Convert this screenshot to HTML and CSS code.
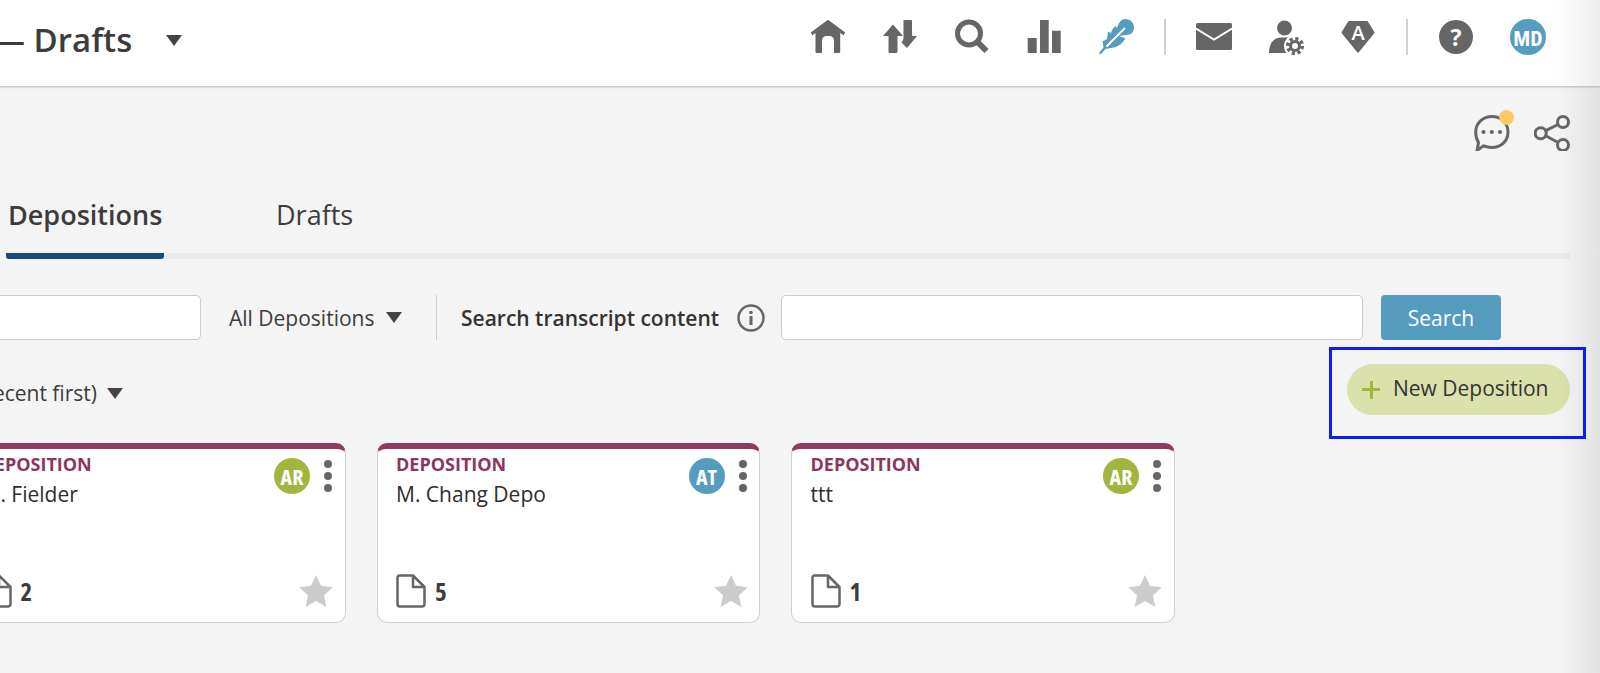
FILE: index.html
```html
<!DOCTYPE html>
<html lang="en">
<head>
<meta charset="utf-8">
<title>Drafts</title>
<link rel="stylesheet" href="styles.css">
</head>
<body>
<header class="topbar">
  <div class="title-wrap">
    <h1 class="title">— Drafts</h1>
    <span class="caret caret-lg"></span>
  </div>
  <nav class="nav">
    <svg class="icon" viewBox="0 0 36 36"><path class="fill" d="M18 .7 35.2 13.6 33.6 16.2 30.2 14V33a1 1 0 0 1-1 1H24V21.5a4.5 4.5 0 0 0-4.500-4.500h-3A4.500 4.500 0 0 0 12 21.500V34H6.500a1 1 0 0 1-1-1V14L2.400 16.200.8 13.600Z"/></svg>
    <svg class="icon" viewBox="0 0 36 36"><path class="fill" d="M11 5.500 21 17H15.500V32.500a1.500 1.500 0 0 1-1.500 1.500H8a1.500 1.500 0 0 1-1.500-1.500V17H1Z"/><path class="fill" d="M21.500 1H29a1 1 0 0 1 1 1V17H35L25 29 19.500 23.500C21 21.500 21.500 20.500 21.500 18Z"/></svg>
    <svg class="icon" viewBox="0 0 36 36"><circle class="line" cx="15" cy="14.500" r="11.500" stroke-width="5"/><path class="line" d="M23.500 23 32.500 32" stroke-width="6"/></svg>
    <svg class="icon" viewBox="0 0 36 36"><rect class="fill" x="1.700" y="19" width="9" height="15"/><rect class="fill" x="14" y="1" width="8.700" height="33"/><rect class="fill" x="26" y="11.700" width="8.700" height="22.300"/></svg>
    <svg class="icon" viewBox="0 0 36 36"><path class="blue" d="M27 0C32 0 36 3.500 36 8.500 36 12 34 15 31 15.500L21 17 27.500 19.500C24 24.500 20 28 15.500 28.500L7.500 30 2.500 35.500 1 34 5.500 28.500 4.500 22.500 9 20 10 12.500 13 14C14 10 16 8 18 7L19 9.500C20 5 23 0 27 0Z"/><path class="vein" d="M8.500 27.500 27 9"/></svg>
    <span class="vsep"></span>
    <svg class="icon" viewBox="0 0 36 36"><rect class="fill" x="0" y="4" width="36" height="27" rx="1.500"/><path class="vein" d="M0 9.500 18 20.500 36 9.500" stroke-width="3"/></svg>
    <svg class="icon" viewBox="0 0 36 36"><circle class="fill" cx="16.500" cy="9" r="7.500"/><path class="fill" d="M1 34C1 24 6 18.500 13 18.500H22L28 34Z"/><circle class="white" cx="27" cy="27" r="11"/><circle class="line" cx="27" cy="27" r="4.500" stroke-width="3"/><circle class="teeth" cx="27" cy="27" r="7.300"/></svg>
    <svg class="icon" viewBox="0 0 36 36"><path class="fill join" d="M9 3H27L33.500 13.500 18 32.500 2.500 13.500Z"/><text class="gem" x="18" y="20.500">A</text></svg>
    <span class="vsep"></span>
    <span class="circle help">?</span>
    <span class="circle md">MD</span>
  </nav>
  <span class="edge-shade"></span>
</header>

<main class="main">
  <div class="tools">
    <span class="comment">
      <svg class="icon" viewBox="0 0 36 36"><path class="line thin" d="M18 1.500C27 1.500 34 8 34 17S27 32.500 18 32.500C14.500 32.500 12 31.500 9.500 30.800L3 35.500 4.500 27.500C2.500 24.500 1.700 21 1.700 17 1.700 8 9 1.500 18 1.500Z"/><circle class="fill" cx="9.500" cy="17" r="2.100"/><circle class="fill" cx="17.800" cy="17" r="2.100"/><circle class="fill" cx="26" cy="17" r="2.100"/></svg>
      <span class="dot"></span>
    </span>
    <svg class="icon" viewBox="0 0 36 36"><circle class="line thin" cx="29" cy="7" r="5.500"/><circle class="line thin" cx="6.700" cy="18.300" r="5.500"/><circle class="line thin" cx="29" cy="30" r="5.500"/><path class="line thin" d="M24 9.500 11.700 15.700M11.700 20.800 24 27.500"/></svg>
  </div>

  <div class="tabs">
    <span class="tab active">Depositions</span>
    <span class="tab">Drafts</span>
  </div>

  <div class="filters">
    <span class="field name-field"></span>
    <span class="select">All Depositions <span class="caret"></span></span>
    <span class="hsep"></span>
    <strong class="search-label">Search transcript content</strong>
    <svg class="info" viewBox="0 0 28 28"><circle class="line info-ring" cx="14" cy="14" r="12.500"/><circle class="fill" cx="14" cy="8.500" r="1.800"/><rect class="fill" x="12.500" y="12" width="3" height="9"/></svg>
    <span class="field content-field"></span>
    <button class="search-btn">Search</button>
  </div>

  <div class="sort-row">
    <div class="sort"><span class="sort-text">Date (most recent first)</span><span class="caret"></span></div>
    <div class="highlight">
      <button class="new-btn"><span class="plus"></span>New Deposition</button>
    </div>
  </div>

  <div class="cards">
    <article class="card">
      <div class="card-top">
        <div class="card-text"><div class="kind">DEPOSITION</div><div class="name">M. Fielder</div></div>
        <span class="avatar green">AR</span>
        <span class="kebab"><i></i><i></i><i></i></span>
      </div>
      <div class="card-bottom">
        <svg class="doc" viewBox="0 0 30 34"><path class="line doc-line" d="M3.500 1.500H17L28.500 13V30A2.500 2.500 0 0 1 26 32.500H4A2.500 2.500 0 0 1 1.500 30V3.500A2 2 0 0 1 3.500 1.500ZM17 1.500V13H28.500"/></svg>
        <span class="count">2</span>
        <svg class="star" viewBox="0 0 34 32"><path d="M17 0 22 10.800 33.800 12.200 25 20.300 27.400 32 17 26.100 6.600 32 9 20.300.2 12.200 12 10.800Z"/></svg>
      </div>
    </article>
    <article class="card">
      <div class="card-top">
        <div class="card-text"><div class="kind">DEPOSITION</div><div class="name">M. Chang Depo</div></div>
        <span class="avatar blue-bg">AT</span>
        <span class="kebab"><i></i><i></i><i></i></span>
      </div>
      <div class="card-bottom">
        <svg class="doc" viewBox="0 0 30 34"><path class="line doc-line" d="M3.500 1.500H17L28.500 13V30A2.500 2.500 0 0 1 26 32.500H4A2.500 2.500 0 0 1 1.500 30V3.500A2 2 0 0 1 3.500 1.500ZM17 1.500V13H28.500"/></svg>
        <span class="count">5</span>
        <svg class="star" viewBox="0 0 34 32"><path d="M17 0 22 10.800 33.800 12.200 25 20.300 27.400 32 17 26.100 6.600 32 9 20.300.2 12.200 12 10.800Z"/></svg>
      </div>
    </article>
    <article class="card">
      <div class="card-top">
        <div class="card-text"><div class="kind">DEPOSITION</div><div class="name">ttt</div></div>
        <span class="avatar green">AR</span>
        <span class="kebab"><i></i><i></i><i></i></span>
      </div>
      <div class="card-bottom">
        <svg class="doc" viewBox="0 0 30 34"><path class="line doc-line" d="M3.500 1.500H17L28.500 13V30A2.500 2.500 0 0 1 26 32.500H4A2.500 2.500 0 0 1 1.500 30V3.500A2 2 0 0 1 3.500 1.500ZM17 1.500V13H28.500"/></svg>
        <span class="count">1</span>
        <svg class="star" viewBox="0 0 34 32"><path d="M17 0 22 10.800 33.800 12.200 25 20.300 27.400 32 17 26.100 6.600 32 9 20.300.2 12.200 12 10.800Z"/></svg>
      </div>
    </article>
  </div>
  <span class="edge-shade"></span>
</main>
</body>
</html>
```

FILE: styles.css
```css
* { box-sizing: border-box; }
html, body { margin: 0; height: 100%; overflow: hidden; }
body { background: #f4f4f4; font-family: "Open Sans", "Liberation Sans", sans-serif; color: #333; position: relative; }

.topbar { height: 86px; background: #fff; display: flex; align-items: flex-start; justify-content: space-between; box-shadow: 0 1px 2px rgba(0,0,0,.25); position: relative; padding-right: 54px; }
.title-wrap { display: flex; align-items: center; margin-left: -8px; height: 78px; }
.title { margin: 0; font-size: 33px; font-weight: 600; color: #3c3c3c; white-space: nowrap; }
.caret { display: inline-block; width: 0; height: 0; border-left: 8px solid transparent; border-right: 8px solid transparent; border-top: 11px solid #444; }
.caret-lg { margin-left: 34px; margin-top: 2px; }

.nav { display: flex; align-items: center; gap: 36px; height: 74px; }
.icon { width: 36px; height: 36px; display: block; flex: none; }
.fill { fill: #666; }
.line { fill: none; stroke: #666; }
.thin { stroke-width: 3; }
.blue { fill: #559cbf; }
.vein { fill: none; stroke: #fff; stroke-width: 2; }
.white { fill: #fff; }
.teeth { fill: none; stroke: #666; stroke-width: 3.500; stroke-dasharray: 3.200 2.530; }
.join { stroke: #666; stroke-width: 2; stroke-linejoin: round; }
.gem { fill: #fff; font-family: "Open Sans", sans-serif; font-size: 20px; font-weight: 600; text-anchor: middle; }
.vsep { width: 2px; height: 36px; background: #d0d0d0; margin: 0 -6px; flex: none; }
.circle { width: 36px; height: 36px; border-radius: 50%; display: flex; align-items: center; justify-content: center; color: #fff; flex: none; }
.help { background: #666; font-weight: 700; font-size: 23px; width: 34px; height: 34px; margin: 0 1px; }
.md { background: #559cbf; font-weight: 700; font-size: 22px; font-stretch: 75%; }

.edge-shade { position: absolute; top: 0; right: 0; bottom: 0; width: 44px; background: linear-gradient(to right, rgba(0,0,0,0), rgba(0,0,0,.07)); pointer-events: none; }

.main { margin-left: -37px; padding: 29px 30px 0 0; height: calc(100% - 86px); position: relative; }

.tools { display: flex; justify-content: flex-end; gap: 24px; }
.comment { position: relative; display: block; }
.dot { position: absolute; width: 15px; height: 15px; border-radius: 50%; background: #f8cb66; right: -4px; top: -5px; }

.tabs { display: flex; margin-top: 44px; margin-left: 43px; height: 64px; border-bottom: 6px solid #ebebeb; padding-left: 2px; }
.tab { font-size: 27px; line-height: 36px; width: 269px; height: 64px; padding-top: 2px; color: #3c3c3c; white-space: nowrap; }
.tab.active { width: 158px; margin-left: -2px; padding-left: 2px; margin-right: 112px; font-weight: 600; border-bottom: 6px solid #154c79; border-radius: 0 0 3px 3px; }

.filters { display: flex; align-items: center; margin-top: 36px; height: 45px; }
.field { display: block; height: 45px; background: #fff; border: 1.500px solid #ccc; border-radius: 5px; flex: none; }
.name-field { width: 238px; }
.select { margin-left: 28px; font-size: 21px; color: #3c3c3c; white-space: nowrap; width: 173px; display: flex; justify-content: space-between; align-items: center; flex: none; }
.hsep { width: 1px; height: 45px; background: #ccc; margin-left: 34px; flex: none; }
.search-label { margin-left: 24px; font-size: 21px; font-weight: 600; white-space: nowrap; flex: none; width: 258px; }
.info { width: 28px; height: 28px; margin-left: 18px; flex: none; }
.info-ring { stroke-width: 2.500; }
.content-field { width: 582px; margin-left: 16px; }
.search-btn { width: 120px; height: 45px; margin-left: 18px; border: 0; border-radius: 4px; background: #559cbf; color: #fff; font: 400 21px "Open Sans", sans-serif; padding: 0; flex: none; }

.sort-row { display: flex; justify-content: space-between; margin-top: 7px; height: 92px; }
.sort { width: 134px; height: 92px; display: flex; align-items: center; justify-content: flex-end; white-space: nowrap; font-size: 21px; color: #3c3c3c; flex: none; position: relative; }
.sort .caret { position: absolute; left: 144px; top: 41px; }
.highlight { border: 3px solid #0a1dff; width: 257px; padding: 14px 13px 0; margin-right: -16px; flex: none; }
.new-btn { display: flex; align-items: center; width: 223px; height: 51px; margin: 0 0 0 2px; border: 0; border-radius: 26px; background: #dae1aa; color: #333; font: 400 21px "Open Sans", sans-serif; padding: 0 0 3px 15px; white-space: nowrap; }
.plus { width: 18px; height: 18px; margin-right: 13px; margin-top: 3px; flex: none; background: linear-gradient(#a2b63f, #a2b63f) center / 100% 3px no-repeat, linear-gradient(#a2b63f, #a2b63f) center / 3px 100% no-repeat; }

.cards { display: flex; gap: 31px; margin-top: 4px; margin-left: -1px; }
.card { width: 383.500px; height: 180px; background: #fff; border: 1.500px solid #d0d0d0; border-top: 6px solid #8f3a63; border-radius: 10px; padding: 0 18.500px; display: flex; flex-direction: column; justify-content: space-between; flex: none; }
.card-top { display: flex; align-items: flex-start; padding-top: 3px; }
.card-text { flex: 1; min-width: 0; }
.kind { font-size: 18px; font-weight: 700; color: #8c3561; line-height: 24px; }
.name { font-size: 21px; color: #2d2d2d; line-height: 32px; margin-top: 2px; }
.avatar { width: 36px; height: 36px; border-radius: 50%; display: flex; align-items: center; justify-content: center; color: #fff; font-weight: 700; font-size: 22px; font-stretch: 75%; margin-top: 6px; flex: none; }
.green { background: #a2b63f; }
.blue-bg { background: #559cbf; }
.kebab { display: flex; flex-direction: column; gap: 4px; margin-left: 14px; margin-right: -6px; margin-top: 8px; flex: none; }
.kebab i { display: block; width: 8px; height: 8px; border-radius: 50%; background: #666; }

.card-bottom { display: flex; align-items: center; padding-bottom: 14px; }
.doc { width: 30px; height: 34px; flex: none; }
.doc-line { stroke-width: 2.500; stroke-linejoin: round; }
.count { margin-left: 9px; font-size: 25px; font-weight: 700; font-stretch: 75%; color: #3c3c3c; flex: 1; }
.star { width: 34px; height: 32px; fill: #ccc; flex: none; margin-right: -7px; }
```
